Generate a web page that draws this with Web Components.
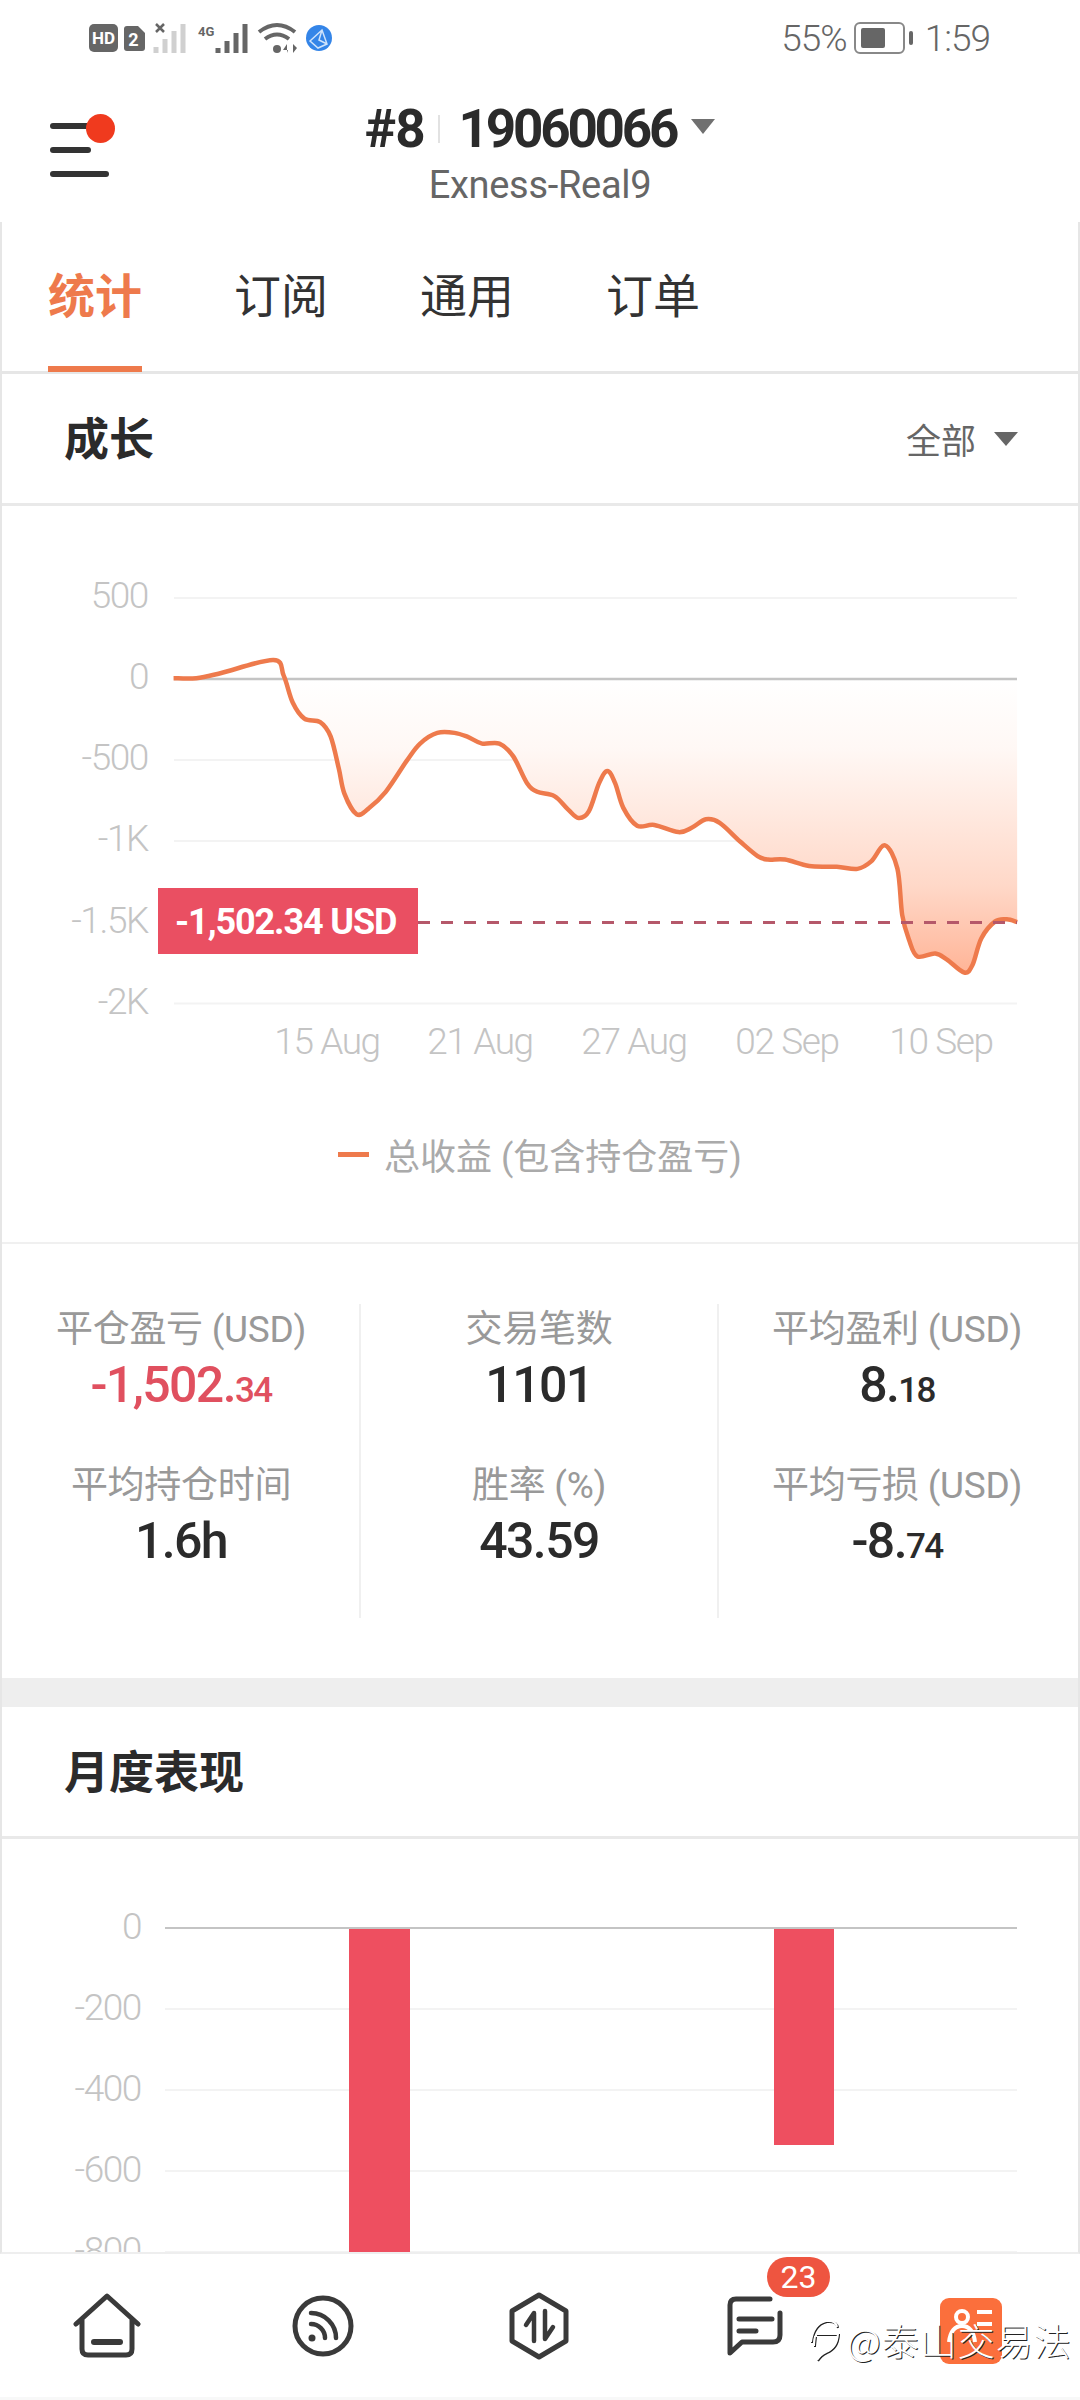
<!DOCTYPE html>
<html>
<head>
<meta charset="utf-8">
<style>
    html, body { margin: 0; padding: 0; background: #fff; }
    body {
        width: 1080px;
        height: 2400px;
        overflow: hidden;
        display: flex;
        flex-direction: column;
        font-family: Roboto, "Noto Sans CJK SC", sans-serif;
    }
</style>
</head>
<body>
<status-bar></status-bar>
<app-header></app-header>
<main-page>
    <tab-bar></tab-bar>
    <section-title heading="成长"><filter-pick></filter-pick></section-title>
    <growth-chart></growth-chart>
    <stat-grid>
        <stat-cell label="平仓盈亏 (USD)" value="-1,502." small="34" tone="loss"></stat-cell>
        <stat-cell label="交易笔数" value="1101"></stat-cell>
        <stat-cell label="平均盈利 (USD)" value="8." small="18"></stat-cell>
        <stat-cell label="平均持仓时间" value="1.6h"></stat-cell>
        <stat-cell label="胜率 (%)" value="43.59"></stat-cell>
        <stat-cell label="平均亏损 (USD)" value="-8." small="74"></stat-cell>
    </stat-grid>
    <section-gap></section-gap>
    <section-title heading="月度表现"></section-title>
    <month-chart></month-chart>
</main-page>
<bottom-nav></bottom-nav>

<script>
const FONT = 'Roboto, "Noto Sans CJK SC", sans-serif';

class StatusBar extends HTMLElement {
    constructor() {
        super();
        this.attachShadow({mode: "open"}).innerHTML = `
        <style>
            :host { display: flex; height: 76px; align-items: center; padding: 0 90px 0 89px; justify-content: space-between; color: #666; font-family: ${FONT}; box-sizing: border-box; flex: none; }
            .icons, .right { display: flex; align-items: center; }
            .right { font-size: 37px; letter-spacing: -1px; font-weight: 300; }
            svg { display: block; }
            .bat { margin: 0 11px 0 7px; }
        </style>
        <div class="icons">
            <svg width="244" height="34" viewBox="0 0 244 34">
                <rect x="0" y="3" width="29" height="28" rx="5" fill="#666"/>
                <text x="14.5" y="23" text-anchor="middle" font-family="Roboto" font-weight="700" font-size="17" fill="#fff">HD</text>
                <path d="M35 6h11l7 7v15a3 3 0 0 1-3 3H35a3 3 0 0 1-3-3V9a3 3 0 0 1 3-3z" fill="#666" transform="translate(3 -1)"/>
                <text x="44.5" y="25" text-anchor="middle" font-family="Roboto" font-weight="700" font-size="18" fill="#fff">2</text>
                <path d="M67 3l8 8M75 3l-8 8" stroke="#666" stroke-width="2.5"/>
                <path d="M67 32v-6M76 32v-14M85 32v-22M94 32V3" stroke="#d0d0d0" stroke-width="5"/>
                <text x="109" y="15" font-family="Roboto" font-weight="700" font-size="13" fill="#666">4G</text>
                <path d="M129 32v-5M138 32v-12M147 32v-20M156 32V3" stroke="#666" stroke-width="5"/>
                <path d="M170 11q18-14 36 0M176 18q12-9 24 0" fill="none" stroke="#666" stroke-width="4"/>
                <circle cx="188" cy="28" r="4" fill="#666"/>
                <path d="M198 32v-9l-4 6h5M204 23v9l4-5z" fill="#666"/>
                <circle cx="230" cy="17" r="13" fill="#3485e8"/>
                <path d="M221 20l12-11 5 14-9 4zM233 9l-3 10 8 4" fill="none" stroke="#cfe3fb" stroke-width="1.5"/>
            </svg>
        </div>
        <div class="right">
            <span>55%</span>
            <svg class="bat" width="60" height="32" viewBox="0 0 60 32">
                <rect x="1" y="1" width="49" height="30" rx="5" fill="none" stroke="#888" stroke-width="2"/>
                <rect x="7" y="6" width="24" height="20" rx="2" fill="#666"/>
                <rect x="55" y="9" width="4" height="14" rx="2" fill="#666"/>
            </svg>
            <span>1:59</span>
        </div>`;
    }
}

class AppHeader extends HTMLElement {
    constructor() {
        super();
        this.attachShadow({mode: "open"}).innerHTML = `
        <style>
            :host { display: block; position: relative; height: 146px; font-family: ${FONT}; flex: none; }
            .menu { position: absolute; left: 50px; top: 38px; width: 66px; height: 64px; }
            .menu i { display: block; height: 6px; border-radius: 3px; background: #333; margin-top: 18px; }
            .menu i:nth-child(1) { width: 42px; margin-top: 9px; }
            .menu i:nth-child(2) { width: 41px; }
            .menu i:nth-child(3) { width: 59px; }
            .dot { position: absolute; left: 36px; top: 0; width: 29px; height: 29px; border-radius: 50%; background: #f03a1e; }
            .center { display: flex; flex-direction: column; align-items: center; padding-top: 31px; }
            .line { display: flex; align-items: center; height: 44px; font-size: 53px; font-weight: 700; color: #2b2b2b; letter-spacing: -3.2px; }
            .hash { letter-spacing: -1px; }
            .sep { width: 2px; height: 28px; background: #e2e2e2; margin: 0 19px 0 13px; }
            .tri { width: 0; height: 0; border: 12px solid transparent; border-top: 15px solid #707070; border-bottom: 0; margin: -6px 0 0 15px; }
            .sub { font-size: 38px; color: #666; margin-top: 12px; letter-spacing: -.3px; }
        </style>
        <div class="menu"><i></i><i></i><i></i><span class="dot"></span></div>
        <div class="center">
            <div class="line"><span class="hash">#8</span><span class="sep"></span><span>19060066</span><span class="tri"></span></div>
            <div class="sub">Exness-Real9</div>
        </div>`;
    }
}

class MainPage extends HTMLElement {
    constructor() {
        super();
        this.attachShadow({mode: "open"}).innerHTML = `
        <style>
            :host { display: flex; flex-direction: column; flex: none; height: 2032px; overflow: hidden; box-sizing: border-box; border-left: 2px solid #e6e6e6; border-right: 2px solid #e6e6e6; border-bottom: 2px solid #eee; }
        </style>
        <slot></slot>`;
    }
}

class TabBar extends HTMLElement {
    constructor() {
        super();
        this.attachShadow({mode: "open"}).innerHTML = `
        <style>
            :host { display: flex; flex: none; height: 152px; box-sizing: border-box; padding-left: 46px; gap: 92px; border-bottom: 3px solid #e6e6e6; font-family: ${FONT}; }
            div { height: 149px; line-height: 149px; font-size: 47px; color: #333; box-sizing: border-box; }
            .on { color: #ee7a4c; font-weight: 700; position: relative; }
            .on::after { content: ""; position: absolute; left: 0; right: 0; bottom: -1px; height: 6px; background: #ee7a4c; }
        </style>
        <div class="on">统计</div><div>订阅</div><div>通用</div><div>订单</div>`;
    }
}

class SectionTitle extends HTMLElement {
    constructor() {
        super();
        this.attachShadow({mode: "open"}).innerHTML = `
        <style>
            :host { display: flex; flex: none; height: 132px; box-sizing: border-box; align-items: center; justify-content: space-between; padding: 0 60px 0 62px; border-bottom: 3px solid #e9e9e9; font-family: ${FONT}; }
            h2 { margin: -4px 0 0; font-size: 45px; font-weight: 700; color: #2b2b2b; }
        </style>
        <h2>${this.getAttribute("heading")}</h2><slot></slot>`;
    }
}

class FilterPick extends HTMLElement {
    constructor() {
        super();
        this.attachShadow({mode: "open"}).innerHTML = `
        <style>
            :host { display: flex; align-items: center; gap: 18px; font-size: 35px; color: #666; font-family: ${FONT}; }
            i { width: 0; height: 0; border: 12px solid transparent; border-top: 14px solid #666; border-bottom: 0; }
        </style>
        <span>全部</span><i></i>`;
    }
}

class GrowthChart extends HTMLElement {
    constructor() {
        super();
        // traced from the curve, x and y are page pixels after the map below
        const raw = [[252,387],[285,387],[320,373],[397,336],[412,380],[425,455],[442,500],[465,510],[480,550],[492,640],[500,710],[518,768],[535,752],[560,705],[590,620],[610,570],[635,540],[660,540],[680,552],[700,570],[725,570],[745,605],[765,680],[780,705],[805,717],[825,755],[840,778],[855,760],[870,680],[882,647],[893,680],[905,750],[925,800],[950,798],[985,818],[1005,805],[1025,782],[1045,792],[1075,845],[1100,885],[1115,895],[1140,895],[1175,913],[1215,915],[1245,921],[1265,900],[1285,855],[1303,920],[1310,1050],[1320,1120],[1332,1166],[1358,1158],[1375,1175],[1400,1211],[1412,1190],[1425,1115],[1445,1068],[1462,1062],[1477,1070]];
        const top = 506;
        const pts = raw.map(([x, y]) => [x / 1.452 - 2, 540 + y / 2.8 - top]);
        let d = `M${pts[0][0]} ${pts[0][1]}`;
        for (let i = 0; i < pts.length - 1; i++) {
            const p0 = pts[Math.max(i - 1, 0)], p1 = pts[i], p2 = pts[i + 1], p3 = pts[Math.min(i + 2, pts.length - 1)];
            d += ` C${(p1[0] + (p2[0] - p0[0]) / 6).toFixed(1)} ${(p1[1] + (p2[1] - p0[1]) / 6).toFixed(1)} ${(p2[0] - (p3[0] - p1[0]) / 6).toFixed(1)} ${(p2[1] - (p3[1] - p1[1]) / 6).toFixed(1)} ${p2[0].toFixed(1)} ${p2[1].toFixed(1)}`;
        }
        const ticks = [["500", 598], ["0", 679], ["-500", 760], ["-1K", 841], ["-1.5K", 922.5], ["-2K", 1003.6]];
        const grid = ticks.filter(t => t[0] != "-1.5K").map(t => {
            const y = t[1] - top;
            return `<line x1="172" x2="1015" y1="${y}" y2="${y}" stroke="#f3f3f3" stroke-width="2"/>`;
        }).join("");
        const labels = ticks.map(t => `<text class="ax" x="146" y="${t[1] - top + 10}" text-anchor="end">${t[0]}</text>`).join("");
        const xlabels = [["15 Aug", 327], ["21 Aug", 480], ["27 Aug", 634], ["02 Sep", 787], ["10 Sep", 941]]
            .map(t => `<text class="ax" x="${t[1] - 2}" y="${1054 - top}" text-anchor="middle">${t[0]}</text>`).join("");
        const zero = 679 - top;
        this.attachShadow({mode: "open"}).innerHTML = `
        <style>
            :host { display: block; flex: none; height: 738px; position: relative; font-family: ${FONT}; box-sizing: border-box; border-bottom: 2px solid #f0f0f0; }
            svg { display: block; position: absolute; left: 0; top: 0; }
            .ax { font-size: 37px; fill: #c4c4c4; letter-spacing: -1.4px; font-weight: 300; }
            .tag { font-size: 36px; font-weight: 700; fill: #fff; letter-spacing: -1.1px; }
            .legend { position: absolute; left: 336px; top: 628px; height: 40px; display: flex; align-items: center; gap: 15px; font-size: 36px; color: #aaa; white-space: nowrap; }
            .legend i { width: 31px; height: 5px; background: #ee7a4c; }
        </style>
        <svg width="1076" height="600" viewBox="0 0 1076 600">
            <defs><linearGradient id="fade" gradientUnits="userSpaceOnUse" x1="0" y1="${zero}" x2="0" y2="${zero + 345}">
                <stop offset="0" stop-color="#fff"/><stop offset=".2" stop-color="#fff8f5"/><stop offset=".6" stop-color="#ffd8c8"/><stop offset="1" stop-color="#ff9f7a"/>
            </linearGradient></defs>
            ${grid}
            <path d="${d} L1015 ${zero} L172 ${zero} Z" fill="url(#fade)"/>
            <line x1="172" x2="1015" y1="${zero}" y2="${zero}" stroke="#c4c4c4" stroke-width="2.5"/>
            <path d="${d}" fill="none" stroke="#ee7a4c" stroke-width="4.5" stroke-linejoin="round"/>
            ${labels}
            ${xlabels}
            <line x1="416" x2="1015" y1="416.5" y2="416.5" stroke="#b5586a" stroke-width="3" stroke-dasharray="12 11"/>
            <rect x="156" y="382" width="260" height="66" fill="#ea4f62"/>
            <text class="tag" x="173" y="428">-1,502.34 USD</text>
        </svg>
        <div class="legend"><i></i><span>总收益 (包含持仓盈亏)</span></div>`;
    }
}

class StatGrid extends HTMLElement {
    constructor() {
        super();
        this.attachShadow({mode: "open"}).innerHTML = `
        <style>
            :host { display: block; flex: none; height: 434px; box-sizing: border-box; padding-top: 60px; }
            .g { display: grid; grid-template-columns: 358px 358px 358px; height: 314px; background:
                linear-gradient(#f0f0f0, #f0f0f0) 357px 0 / 2px 100% no-repeat,
                linear-gradient(#f0f0f0, #f0f0f0) 715px 0 / 2px 100% no-repeat; align-content: start; row-gap: 42px; padding-top: 1px; box-sizing: border-box; }
        </style>
        <div class="g"><slot></slot></div>`;
    }
}

class StatCell extends HTMLElement {
    constructor() {
        super();
        const small = this.getAttribute("small");
        const tone = this.getAttribute("tone") == "loss" ? "#e0505f" : "#2b2b2b";
        this.attachShadow({mode: "open"}).innerHTML = `
        <style>
            :host { display: flex; flex-direction: column; align-items: center; font-family: ${FONT}; height: 114px; }
            .l { font-size: 37px; line-height: 50px; color: #999; letter-spacing: -.3px; white-space: nowrap; }
            .v { font-size: 50px; line-height: 61px; font-weight: 500; color: ${tone}; letter-spacing: -1.6px; white-space: nowrap; }
            .v small { font-size: 35px; }
        </style>
        <div class="l">${this.getAttribute("label")}</div>
        <div class="v">${this.getAttribute("value")}${small ? `<small>${small}</small>` : ""}</div>`;
    }
}

class SectionGap extends HTMLElement {
    constructor() {
        super();
        this.attachShadow({mode: "open"}).innerHTML = `<style>:host { display: block; flex: none; height: 29px; background: #eee; }</style>`;
    }
}

class MonthChart extends HTMLElement {
    constructor() {
        super();
        const top = 1839;
        const rows = [["0", 1928], ["-200", 2009], ["-400", 2090], ["-600", 2171], ["-800", 2252]].map(t => `
            <line x1="163" x2="1015" y1="${t[1] - top}" y2="${t[1] - top}" stroke="${t[0] == "0" ? "#c4c4c4" : "#f3f3f3"}" stroke-width="2"/>
            <text class="ax" x="139" y="${t[1] - top + 11}" text-anchor="end">${t[0]}</text>`).join("");
        this.attachShadow({mode: "open"}).innerHTML = `
        <style>
            :host { display: block; flex: 1; position: relative; overflow: hidden; font-family: ${FONT}; }
            svg { display: block; }
            .ax { font-size: 37px; fill: #c4c4c4; letter-spacing: -1.4px; font-weight: 300; }
        </style>
        <svg width="1076" height="420" viewBox="0 0 1076 420">
            ${rows}
            <rect x="347" y="90" width="61" height="330" fill="#ee4f60"/>
            <rect x="772" y="90" width="60" height="216" fill="#ee4f60"/>
        </svg>`;
    }
}

class NavItem extends HTMLElement {
    constructor() {
        super();
        this.attachShadow({mode: "open"}).innerHTML = `
        <style>
            :host { display: flex; flex: none; height: 72px; align-items: center; justify-content: center; position: relative; }
            .badge { position: absolute; left: 41px; top: -33px; width: 63px; height: 40px; border-radius: 20px; background: #ee5540; color: #fff; font-size: 32px; line-height: 40px; text-align: center; font-family: ${FONT}; }
        </style>
        <slot></slot>${this.getAttribute("badge") ? `<span class="badge">${this.getAttribute("badge")}</span>` : ""}`;
    }
}
customElements.define("nav-item", NavItem);

class BottomNav extends HTMLElement {
    constructor() {
        super();
        const s = `fill="none" stroke="#3a3a3a" stroke-width="5" stroke-linecap="round" stroke-linejoin="round"`;
        this.attachShadow({mode: "open"}).innerHTML = `
        <style>
            :host { display: block; flex: none; height: 146px; box-sizing: border-box; position: relative; background: #fff; border-bottom: 3px solid #f8f8f8; font-family: "Noto Sans CJK SC", sans-serif; }
            .row { display: grid; grid-template-columns: 216px 216px 216px 216px 216px; justify-items: center; padding-top: 36px; margin-left: -1px; }
            svg { display: block; }
            .low { margin-top: 9px; }
            .mark { position: absolute; left: 808px; top: 64px; height: 44px; display: flex; align-items: center; pointer-events: none; }
            .mark span { font-size: 37px; color: #fff; text-shadow: 1px 1px 0 #222; margin-left: 7px; white-space: nowrap; letter-spacing: 1px; font-weight: 300; }
        </style>
        <div class="row">
            <nav-item><svg width="68" height="66" viewBox="0 0 68 66" ${s}>
                <path d="M3 31L34 3l31 28M9 26v30q0 6 6 6h38q6 0 6-6V26"/><path d="M21 49h26" stroke-width="6"/>
            </svg></nav-item>
            <nav-item><svg width="62" height="64" viewBox="0 0 62 64" ${s}>
                <circle cx="31" cy="32" r="28"/>
                <path d="M19 30a14 14 0 0 1 14 14M19 19a25 25 0 0 1 25 25" stroke-width="4.5"/>
                <circle cx="20" cy="44" r="3.5" fill="#3a3a3a" stroke="none"/>
            </svg></nav-item>
            <nav-item><svg width="62" height="68" viewBox="0 0 62 68" ${s}>
                <path d="M31 3l27 16v30L31 65 4 49V19z"/>
                <path d="M26 49V21l-8 12M37 19v28l8-12" stroke-width="4.5"/>
            </svg></nav-item>
            <nav-item badge="23"><svg width="58" height="62" viewBox="0 0 58 62" ${s}>
                <path d="M44 4H10q-6 0-6 6v48l12-11h31q7 0 7-7V18"/>
                <path d="M13 24h33M13 36h17"/>
            </svg></nav-item>
            <nav-item><svg class="low" width="62" height="66" viewBox="0 0 62 66">
                <rect width="62" height="66" rx="9" fill="#fb6f3c"/>
                <circle cx="22" cy="19" r="6" fill="none" stroke="#fff" stroke-width="4"/>
                <path d="M9 44q2-16 13-16t13 16M37 14h15M37 26h15" fill="none" stroke="#fff" stroke-width="4"/>
            </svg></nav-item>
        </div>
        <div class="mark">
            <svg width="32" height="44" viewBox="0 0 32 44" fill="none" stroke-width="2">
                <g stroke="#222" transform="translate(1 1)"><path d="M3 24Q5 6 18 3q10-1 11 6M8 16h22q-1 14-12 18-6 3-9 8M7 18q-1 8-1 10"/></g>
                <g stroke="#fff"><path d="M3 24Q5 6 18 3q10-1 11 6M8 16h22q-1 14-12 18-6 3-9 8M7 18q-1 8-1 10"/></g>
            </svg>
            <span>@泰山交易法</span>
        </div>`;
    }
}

customElements.define("status-bar", StatusBar);
customElements.define("app-header", AppHeader);
customElements.define("main-page", MainPage);
customElements.define("tab-bar", TabBar);
customElements.define("section-title", SectionTitle);
customElements.define("filter-pick", FilterPick);
customElements.define("growth-chart", GrowthChart);
customElements.define("stat-grid", StatGrid);
customElements.define("stat-cell", StatCell);
customElements.define("section-gap", SectionGap);
customElements.define("month-chart", MonthChart);
customElements.define("bottom-nav", BottomNav);
</script>
</body>
</html>
